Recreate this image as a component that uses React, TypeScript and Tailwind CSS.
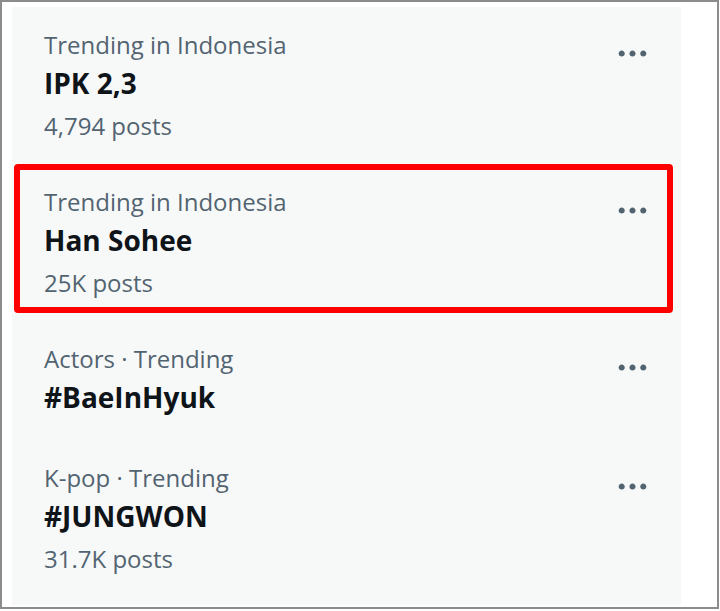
import React from "react";

type Trend = {
  meta: string;
  title: string;
  posts?: string;
  marked?: boolean;
};

const trends: Trend[] = [
  { meta: "Trending in Indonesia", title: "IPK 2,3", posts: "4,794 posts" },
  { meta: "Trending in Indonesia", title: "Han Sohee", posts: "25K posts", marked: true },
  { meta: "Actors · Trending", title: "#BaeInHyuk" },
  { meta: "K-pop · Trending", title: "#JUNGWON", posts: "31.7K posts" },
];

function MoreIcon() {
  return (
    <svg viewBox="0 0 24 24" className="w-[37px] h-[37px] fill-[#536471]">
      <path d="M3 12c0-1.1.9-2 2-2s2 .9 2 2-.9 2-2 2-2-.9-2-2zm9 2c1.1 0 2-.9 2-2s-.9-2-2-2-2 .9-2 2 .9 2 2 2zm7 0c1.1 0 2-.9 2-2s-.9-2-2-2-2 .9-2 2 .9 2 2 2z" />
    </svg>
  );
}

function TrendRow({ trend }: { trend: Trend }) {
  return (
    <div
      className={
        "relative flex items-start justify-between pl-[32px] pr-[30px] pt-[21px] " +
        (trend.posts ? "pb-[18px]" : "pb-[22px]")
      }
    >
      <div className="flex flex-col">
        <span className="text-[24px] leading-[34px] text-[#536471]">{trend.meta}</span>
        <span className="text-[28px] leading-[42px] font-bold text-[#0f1419]">{trend.title}</span>
        {trend.posts && (
          <span className="mt-[2px] text-[24px] leading-[40px] text-[#536471]">{trend.posts}</span>
        )}
      </div>
      <div className="mt-[7px]">
        <MoreIcon />
      </div>
      {trend.marked && (
        <div className="absolute left-[2px] top-0 w-[659px] h-[149px] border-[6px] border-[#ff0000] rounded-[4px] pointer-events-none" />
      )}
    </div>
  );
}

export default function App() {
  return (
    <div
      className="w-[719px] h-[609px] border-2 border-[#8c8c8c] bg-white pl-[10px] pt-[5px] pr-[36px] pb-[2px]"
      style={{ fontFamily: '"Open Sans", "Noto Sans", sans-serif' }}
    >
      <div className="h-full bg-[#f7f9f9]">
        {trends.map((t) => (
          <TrendRow key={t.title} trend={t} />
        ))}
      </div>
    </div>
  );
}
